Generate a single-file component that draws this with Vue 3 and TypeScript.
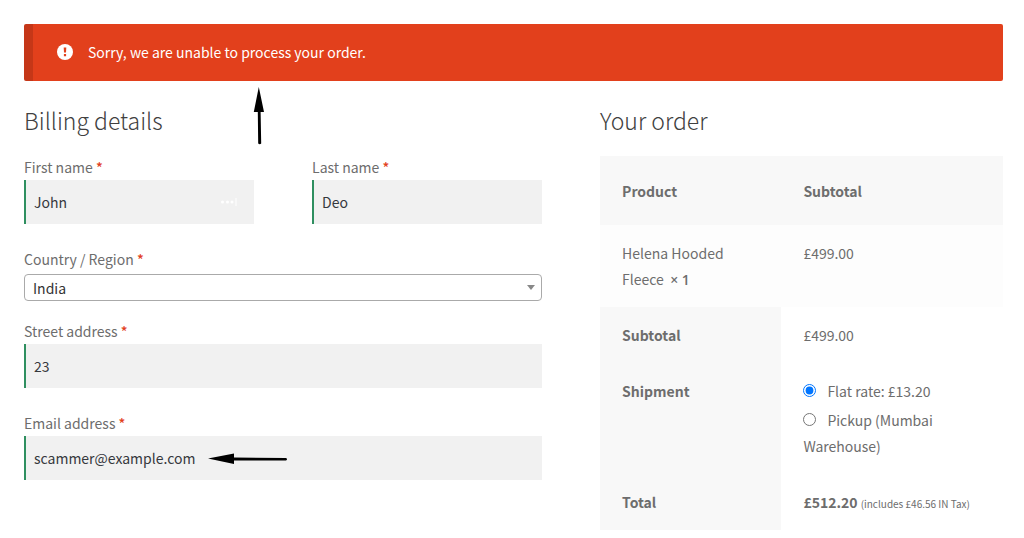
<script setup lang="ts">
import { ref } from 'vue'

interface ShippingOption {
  id: string
  label: string
}

const firstName = ref('John')
const lastName = ref('Deo')
const country = ref('India')
const street = ref('23')
const email = ref('scammer@example.com')
const shipping = ref('flat')

const shippingOptions: ShippingOption[] = [
  { id: 'flat', label: 'Flat rate: £13.20' },
  { id: 'pickup', label: 'Pickup (Mumbai Warehouse)' },
]
</script>

<template>
  <main class="page">
    <div class="notice" role="alert">
      <svg class="notice-icon" viewBox="0 0 16 16" aria-hidden="true">
        <circle cx="8" cy="8" r="8" fill="#fff" />
        <path d="M6.7 3.4h2.6l-.3 5.2H7zM6.9 10h2.2v2.3H6.9z" fill="#e2401c" />
      </svg>
      <span>Sorry, we are unable to process your order.</span>
      <svg class="arrow-up" viewBox="0 0 12 58" aria-hidden="true">
        <path d="M5.8 0L11 25H7.6L8.2 56.5Q6.8 58 5.2 56.5L4.8 25H.8z" fill="#000" />
      </svg>
    </div>

    <form class="checkout" @submit.prevent>
      <section>
        <h2>Billing details</h2>
        <div class="names">
          <div class="field">
            <label for="first">First name <b class="required">*</b></label>
            <div class="control">
              <input id="first" v-model="firstName" type="text" />
              <svg class="autofill" viewBox="0 0 18 10" aria-hidden="true">
                <g fill="#fff">
                  <circle cx="2.5" cy="5" r="1.5" />
                  <circle cx="7.5" cy="5" r="1.5" />
                  <circle cx="12" cy="5" r="1.5" />
                  <path d="M15.5 1h1v8h-1z" />
                </g>
              </svg>
            </div>
          </div>
          <div class="field">
            <label for="last">Last name <b class="required">*</b></label>
            <input id="last" v-model="lastName" type="text" />
          </div>
        </div>
        <div class="field country">
          <label for="country">Country / Region <b class="required">*</b></label>
          <div class="control">
            <select id="country" v-model="country">
              <option>India</option>
            </select>
            <svg class="caret" viewBox="0 0 8 5" aria-hidden="true">
              <path d="M0 0h8L4 5z" fill="#888" />
            </svg>
          </div>
        </div>
        <div class="field">
          <label for="street">Street address <b class="required">*</b></label>
          <input id="street" v-model="street" type="text" />
        </div>
        <div class="field">
          <label for="email">Email address <b class="required">*</b></label>
          <div class="control">
            <input id="email" v-model="email" type="email" />
            <svg class="arrow-left" viewBox="0 0 80 12" aria-hidden="true">
              <path d="M0 5.5L26 .6V4.6L78 5Q80 6.2 78 7.6L26 7.4V11z" fill="#000" />
            </svg>
          </div>
        </div>
      </section>

      <section>
        <h2>Your order</h2>
        <table>
          <thead>
            <tr><th scope="col">Product</th><th scope="col">Subtotal</th></tr>
          </thead>
          <tbody>
            <tr>
              <td>Helena Hooded Fleece&nbsp; <strong class="qty">×&nbsp;1</strong></td>
              <td>£499.00</td>
            </tr>
          </tbody>
          <tfoot>
            <tr><th scope="row">Subtotal</th><td>£499.00</td></tr>
            <tr>
              <th scope="row">Shipment</th>
              <td>
                <ul>
                  <li v-for="option in shippingOptions" :key="option.id">
                    <input :id="option.id" v-model="shipping" type="radio" name="shipping" :value="option.id" />
                    <label :for="option.id">{{ option.label }}</label>
                  </li>
                </ul>
              </td>
            </tr>
            <tr>
              <th scope="row">Total</th>
              <td><strong>£512.20</strong> <small>(includes £46.56 IN Tax)</small></td>
            </tr>
          </tfoot>
        </table>
      </section>
    </form>
  </main>
</template>

<style>
body {
  margin: 0;
  background: #fff;
}
</style>

<style scoped>
.page {
  box-sizing: border-box;
  padding: 24px 21px 0 24px;
  font-family: "Noto Sans CJK SC", "Noto Sans", sans-serif;
  font-size: 14px;
  line-height: 26px;
  color: #6d6d6d;
}
.notice {
  position: relative;
  display: flex;
  align-items: center;
  gap: 15px;
  padding: 15px 24px 16px;
  border-left: 9px solid #c53718;
  border-radius: 2px;
  background: #e2401c;
  color: #fff;
}
.notice-icon {
  width: 16px;
  height: 16px;
}
.arrow-up {
  position: absolute;
  left: 220px;
  top: 63px;
  width: 12px;
  height: 58px;
}
.checkout {
  display: grid;
  grid-template-columns: 9fr 7fr;
  gap: 58px;
  margin-top: 23px;
}
h2 {
  margin: 0 0 18px;
  font-size: 23px;
  line-height: 32px;
  font-weight: 300;
  color: #404040;
}
.names {
  display: grid;
  grid-template-columns: 1fr 1fr;
  gap: 58px;
}
.field {
  margin-bottom: 22px;
}
.field > label {
  display: block;
}
.country {
  margin-bottom: 17px;
}
.country label {
  margin-bottom: 2px;
}
.required {
  color: #e2401c;
  font-weight: 500;
}
.control {
  position: relative;
}
input[type="text"],
input[type="email"] {
  display: block;
  box-sizing: border-box;
  width: 100%;
  height: 44px;
  padding: 0 8px;
  border: 0;
  border-left: 2px solid #2f8f60;
  border-radius: 0;
  background: #f1f1f1;
  color: #36383d;
  font: inherit;
}
select {
  display: block;
  width: 100%;
  height: 27px;
  padding: 0 8px;
  border: 1px solid #aaa;
  border-radius: 4px;
  appearance: none;
  background: #fff;
  color: #333;
  font: inherit;
}
.autofill {
  position: absolute;
  right: 16px;
  top: 17px;
  width: 18px;
  height: 10px;
}
.caret {
  position: absolute;
  right: 7px;
  top: 11px;
  width: 8px;
  height: 5px;
}
.arrow-left {
  position: absolute;
  left: 184px;
  top: 17px;
  width: 80px;
  height: 12px;
}
table {
  width: 100%;
  margin-top: 20px;
  table-layout: fixed;
  border-collapse: collapse;
}
th,
td {
  padding: 15px 22px;
  text-align: left;
  vertical-align: top;
}
th:first-child {
  width: 45%;
  box-sizing: border-box;
}
th {
  background: #f8f8f8;
  font-weight: 700;
}
thead th {
  padding: 22px 22px 21px;
}
tbody td {
  background: #fdfdfd;
}
.qty {
  font-family: "Open Sans", sans-serif;
  font-size: 14px;
  font-weight: 600;
  line-height: 20px;
}
ul {
  margin: 0;
  padding: 0;
  list-style: none;
}
li + li {
  margin-top: 3px;
}
input[type="radio"] {
  width: 13px;
  height: 13px;
  margin: 0 11px 0 0;
  accent-color: #0075ff;
}
small {
  font-size: 10px;
  line-height: 20px;
}
</style>
